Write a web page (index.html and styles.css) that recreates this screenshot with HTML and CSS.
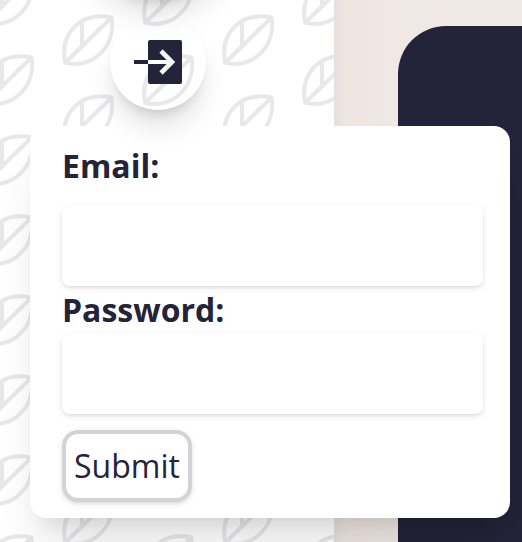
FILE: index.html
```
<!DOCTYPE html>
<html lang="en">
<head>
<meta charset="utf-8">
<title>Login</title>
<link rel="stylesheet" href="styles.css">
</head>
<body>
<div class="app">
  <aside class="sidebar">
    <svg class="pattern" width="334" height="542" aria-hidden="true">
      <defs>
        <g id="leaf" fill="none" stroke="#e8e8eb" stroke-width="4" stroke-linejoin="round">
          <path d="M3.3 48.8C-2.5 20 18 -3 49.5 3.5C54 32 32 55 3.3 48.8ZM3.3 48.8L49.5 3.5M20 32V9"/>
        </g>
        <pattern id="leaves" width="160" height="80" patternUnits="userSpaceOnUse">
          <use href="#leaf" x="62" y="14"/>
          <use href="#leaf" x="-18" y="54"/>
          <use href="#leaf" x="-18" y="-26"/>
          <use href="#leaf" x="142" y="54"/>
          <use href="#leaf" x="142" y="-26"/>
        </pattern>
      </defs>
      <rect width="334" height="542" fill="url(#leaves)"/>
    </svg>
    <nav class="actions">
      <span class="round avatar"></span>
      <button class="round" aria-label="Log in">
        <svg width="48" height="44" viewBox="0 0 48 44">
          <rect x="14" width="34" height="44" rx="2" fill="#232339"/>
          <path d="M0 22H14" stroke="#232339" stroke-width="4"/>
          <path d="M14 22H38" stroke="#fff" stroke-width="4"/>
          <path d="M27 11L38 22L27 33" fill="none" stroke="#f4f4f5" stroke-width="4.6"/>
        </svg>
      </button>
    </nav>
  </aside>
  <main class="content"><div class="board"></div></main>
  <form class="login">
    <label class="label first" for="email">Email:</label>
    <input class="field" id="email" type="email">
    <label class="label" for="password">Password:</label>
    <input class="field" id="password" type="password">
    <button class="submit" type="button">Submit</button>
  </form>
</div>
</body>
</html>
```

FILE: styles.css
```
* { box-sizing: border-box; }
body {
  margin: 0;
  font: 32px/48px "Open Sans", "Noto Sans", sans-serif;
  color: #232339;
}
.app {
  position: relative;
  display: grid;
  grid-template-columns: 334px 1fr;
  height: 542px;
  overflow: hidden;
}
.sidebar { position: relative; background: #fff; }
.pattern { position: absolute; inset: 0; }
.actions {
  position: relative;
  z-index: 2;
  display: flex;
  flex-direction: column;
  align-items: center;
  gap: 16px;
  width: 160px;
  margin: -162px 0 0 78px;
}
.round {
  display: grid;
  place-items: center;
  width: 96px;
  height: 96px;
  padding: 0;
  border: 0;
  border-radius: 50%;
  background: transparent;
  box-shadow: 0 20px 30px -6px rgba(0, 0, 0, .14), 0 8px 12px -6px rgba(0, 0, 0, .14);
}
.avatar { width: 160px; height: 160px; }
.content {
  padding: 26px 0 0 64px;
  background: linear-gradient(90deg, #e6e0dc, #efe6e2 14px, #f0e8e4 64px, #f0eae6 188px);
  overflow: hidden;
}
.board {
  width: 400px;
  height: 600px;
  border-radius: 48px;
  background: #232339;
}
.login {
  position: absolute;
  z-index: 1;
  left: 30px;
  top: 126px;
  display: flex;
  flex-direction: column;
  width: 480px;
  padding: 16px 27px 16px 32px;
  border-radius: 16px;
  background: #fff;
  box-shadow: 0 40px 50px -10px rgba(0, 0, 0, .1), 0 16px 20px -12px rgba(0, 0, 0, .1);
}
.label { font-weight: 700; }
.first { margin-bottom: 16px; }
.field {
  width: 421px;
  height: 80px;
  padding: 16px;
  border: 0;
  border-radius: 8px;
  font: inherit;
  background: #fff;
  box-shadow: 0 2px 6px rgba(0, 0, 0, .1), 0 2px 4px -2px rgba(0, 0, 0, .1);
}
.submit {
  align-self: flex-start;
  margin-top: 16px;
  padding: 8px;
  border: 4px solid #d3d3d7;
  border-radius: 16px;
  font: inherit;
  color: inherit;
  background: #fff;
  box-shadow: 0 2px 6px rgba(0, 0, 0, .1), 0 2px 4px -2px rgba(0, 0, 0, .1);
}
```
